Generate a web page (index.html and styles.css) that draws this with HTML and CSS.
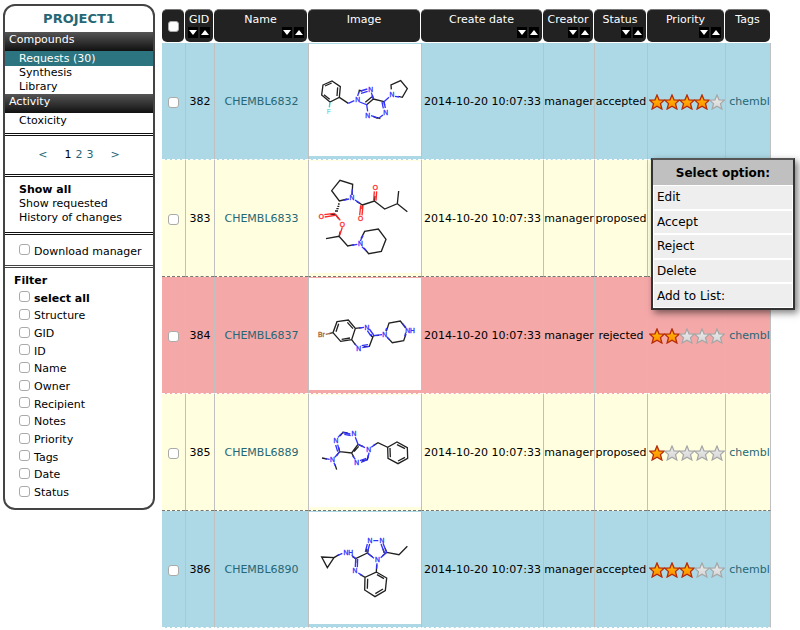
FILE: index.html
```html
<!DOCTYPE html>
<html lang="en">
<head>
<meta charset="utf-8">
<title>PROJECT1 - Requests</title>
<link rel="stylesheet" href="styles.css">
</head>
<body>
<svg class="defs" aria-hidden="true">
  <linearGradient id="gold" x1="0" y1="0" x2="0" y2="1"><stop offset="0" stop-color="#ffc107"/><stop offset="1" stop-color="#ff8a00"/></linearGradient>
  <linearGradient id="grey" x1="0" y1="0" x2="0" y2="1"><stop offset="0" stop-color="#eeeeee"/><stop offset="1" stop-color="#d4d4d4"/></linearGradient>
  <symbol id="on" viewBox="0 0 16 16"><path d="M8 1 L10 5.8 L15.3 6.1 L11.5 9.6 L12.9 15 L8 12.2 L3.1 15 L4.5 9.6 L.7 6.1 L6 5.8Z" fill="url(#gold)" stroke="#b52a08" stroke-width="1.3"/></symbol>
  <symbol id="off" viewBox="0 0 16 16"><path d="M8 1 L10 5.8 L15.3 6.1 L11.5 9.6 L12.9 15 L8 12.2 L3.1 15 L4.5 9.6 L.7 6.1 L6 5.8Z" fill="url(#grey)" stroke="#a6a6a6" stroke-width="1.2"/></symbol>
</svg>
<div class="page">
  <aside class="sidebar">
    <h1>PROJECT1</h1>
    <h2>Compounds</h2>
    <ul class="nav">
      <li class="current"><a href="#">Requests (30)</a></li>
      <li><a href="#">Synthesis</a></li>
      <li><a href="#">Library</a></li>
    </ul>
    <h2>Activity</h2>
    <ul class="nav last"><li><a href="#">Ctoxicity</a></li></ul>
    <nav class="pager"><a href="#">&lt;</a><span class="pages"><b>1</b><a href="#">2</a><a href="#">3</a></span><a href="#">&gt;</a></nav>
    <ul class="views">
      <li class="strong"><a href="#">Show all</a></li>
      <li><a href="#">Show requested</a></li>
      <li><a href="#">History of changes</a></li>
    </ul>
    <div class="download"><label><input type="checkbox">Download manager</label></div>
    <h3>Filter</h3>
    <div class="filters">
      <label class="strong"><input type="checkbox">select all</label>
      <label><input type="checkbox">Structure</label>
      <label><input type="checkbox">GID</label>
      <label><input type="checkbox">ID</label>
      <label><input type="checkbox">Name</label>
      <label><input type="checkbox">Owner</label>
      <label><input type="checkbox">Recipient</label>
      <label><input type="checkbox">Notes</label>
      <label><input type="checkbox">Priority</label>
      <label><input type="checkbox">Tags</label>
      <label><input type="checkbox">Date</label>
      <label><input type="checkbox">Status</label>
    </div>
  </aside>
  <main class="content">
    <table>
      <colgroup><col class="c-check"><col class="c-gid"><col class="c-name"><col class="c-image"><col class="c-date"><col class="c-creator"><col class="c-status"><col class="c-priority"><col class="c-tags"></colgroup>
      <thead>
        <tr>
          <th><div class="head mid"><input type="checkbox" aria-label="Select all rows"></div></th>
          <th><div class="head">GID<span class="sort"><button class="down" aria-label="Sort descending"></button><button class="up" aria-label="Sort ascending"></button></span></div></th>
          <th><div class="head">Name<span class="sort"><button class="down" aria-label="Sort descending"></button><button class="up" aria-label="Sort ascending"></button></span></div></th>
          <th><div class="head">Image</div></th>
          <th><div class="head">Create date<span class="sort"><button class="down" aria-label="Sort descending"></button><button class="up" aria-label="Sort ascending"></button></span></div></th>
          <th><div class="head">Creator<span class="sort"><button class="down" aria-label="Sort descending"></button><button class="up" aria-label="Sort ascending"></button></span></div></th>
          <th><div class="head">Status<span class="sort"><button class="down" aria-label="Sort descending"></button><button class="up" aria-label="Sort ascending"></button></span></div></th>
          <th><div class="head">Priority<span class="sort"><button class="down" aria-label="Sort descending"></button><button class="up" aria-label="Sort ascending"></button></span></div></th>
          <th><div class="head">Tags</div></th>
        </tr>
      </thead>
      <tbody>
        <tr class="accepted">
          <td><input type="checkbox" aria-label="Select 382"></td><td>382</td><td><a href="#">CHEMBL6832</a></td>
          <td class="image"><svg class="mol" viewBox="12 12 336 336">
            <path d="M54 135L81 123L106 140L103 172L75 186L50 165ZM60 138L80 129M98 142L96 168M74 178L57 164M103 172L130 190M205 177L185 194M201 170L181 187M205 177L237 185M226 236L216 233M205 177L202 165M259 148L258 135L287 122L307 146L292 172L280 169M172 153L163 151L161 160M237 185L239 195M204 229L218 235"/>
            <path class="n" d="M130 190L148 182M158 168L161 158M167 153L187 147M168 160L188 154M199 158L205 177M164 186L185 194L188 214M237 185L252 172M237 185L241 204M231 186L235 205M198 227L216 233M221 235L234 225M270 169L282 171"/>
            <path class="f" d="M75 186L73 202"/>
            <g class="n"><text x="158" y="186">N</text><text x="197" y="155">N</text><text x="188" y="234">N</text><text x="242" y="225">N</text><text x="261" y="172">N</text></g><text class="f" x="71" y="222">F</text>
          </svg></td>
          <td>2014-10-20 10:07:33</td><td>manager</td><td>accepted</td>
          <td><span class="stars" role="img" aria-label="4 of 5"><svg><use href="#on"/></svg><svg><use href="#on"/></svg><svg><use href="#on"/></svg><svg><use href="#on"/></svg><svg><use href="#off"/></svg></span></td><td class="tag"><a href="#">chembl</a></td>
        </tr>
        <tr class="proposed">
          <td><input type="checkbox" aria-label="Select 383"></td><td>383</td><td><a href="#">CHEMBL6833</a></td>
          <td class="image"><svg class="mol" viewBox="12 3 336 336">
            <path d="M141 105L143 73L105 61L80 92L103 123L127 117M99 132H104M97 139H103M94 146H101M90 153H99M90 162L76 163M90 162L102 177M172 135L208 123L239 147L277 131L307 155M277 131L281 93M63 236L102 229L128 258L148 254M102 229L106 214M172 135L155 124M168 236L179 214L220 207L243 238L229 274L191 281L177 264M172 135L171 147M208 123L210 108"/>
            <path class="n" d="M142 88L141 105M150 120L165 130M140 256L157 253M166 243L174 227M171 260L184 273M115 121L132 117"/>
            <path class="o" d="M88 160L58 164M90 166L59 171M90 162L106 181M112 202L104 226M174 136L171 166M167 136L164 166M206 122L208 94M213 122L215 94"/>
            <g class="n"><text x="141" y="121">N</text><text x="166" y="258">N</text></g><g class="o"><text x="49" y="178">O</text><text x="112" y="200">O</text><text x="167" y="184">O</text><text x="211" y="91">O</text></g>
          </svg></td>
          <td>2014-10-20 10:07:33</td><td>manager</td><td>proposed</td>
          <td></td><td class="tag"><a href="#">chembl</a></td>
        </tr>
        <tr class="rejected">
          <td><input type="checkbox" aria-label="Select 384"></td><td>384</td><td><a href="#">CHEMBL6837</a></td>
          <td class="image"><svg class="mol" viewBox="12 10 336 336">
            <path d="M96 141L130 136L151 161L140 195L107 200L84 174ZM101 147L93 171M127 143L144 162M135 190L110 194M140 195L151 210M151 161L170 159M205 183L193 215L176 216M197 178L201 187M205 183L222 182M244 170L252 145L286 139L302 160M303 178L296 198L262 204L247 188M84 174L72 177"/>
            <path class="n" d="M162 160L177 158M187 168L198 184M193 163L206 181M149 207L155 214M170 213L189 210M172 219L193 215M206 183L231 180M242 168L245 160M245 186L253 195M293 147L303 159M302 174L299 185"/>
            <path class="br" d="M62 179L76 176"/>
            <g class="n"><text x="186" y="165">N</text><text x="161" y="230">N</text><text x="239" y="186">N</text><text x="315" y="174">NH</text></g><text class="br" x="49" y="188">Br</text>
          </svg></td>
          <td>2014-10-20 10:07:33</td><td>manager</td><td>rejected</td>
          <td><span class="stars" role="img" aria-label="2 of 5"><svg><use href="#on"/></svg><svg><use href="#on"/></svg><svg><use href="#off"/></svg><svg><use href="#off"/></svg><svg><use href="#off"/></svg></span></td><td class="tag"><a href="#">chembl</a></td>
        </tr>
        <tr class="proposed">
          <td><input type="checkbox" aria-label="Select 385"></td><td>385</td><td><a href="#">CHEMBL6889</a></td>
          <td class="image"><svg class="mol" viewBox="12 15 336 336">
            <path d="M104 185L140 189L159 163M147 185L161 169M140 189L147 202M171 213L187 209L190 195M159 163L175 170M104 185L101 172M104 185L94 198M51 204L66 207M90 223L95 239M205 167L219 158L248 172L276 156L307 173L308 205L279 221L249 205L248 172M255 174L256 202M276 164L300 176M300 202L279 213M128 129L114 127L105 138"/>
            <path class="n" d="M99 142L108 132M112 127L136 132M118 133L137 137M151 142L159 163L180 173M192 188L189 205M165 212L184 205M168 217L187 209M143 198L151 208M104 185L98 164M98 185L92 165M104 185L89 202M61 206L74 208M87 218L91 228M199 172L211 163"/>
            <g class="n"><text x="93" y="159">N</text><text x="147" y="139">N</text><text x="191" y="186">N</text><text x="155" y="225">N</text><text x="82" y="217">N</text></g>
          </svg></td>
          <td>2014-10-20 10:07:33</td><td>manager</td><td>proposed</td>
          <td><span class="stars" role="img" aria-label="1 of 5"><svg><use href="#on"/></svg><svg><use href="#off"/></svg><svg><use href="#off"/></svg><svg><use href="#off"/></svg><svg><use href="#off"/></svg></span></td><td class="tag"><a href="#">chembl</a></td>
        </tr>
        <tr class="accepted">
          <td><input type="checkbox" aria-label="Select 386"></td><td>386</td><td><a href="#">CHEMBL6890</a></td>
          <td class="image"><svg class="mol" viewBox="12 12 336 336">
            <path d="M50 147L87 149L67 179ZM87 149L102 140M152 152L187 135M188 135L190 123M183 132L185 122M245 133L240 121M238 135L234 123M245 133L282 140L307 115M245 133L232 144M187 135L203 147M152 152L142 145M215 170L214 192L180 208L165 199M214 192L245 210L241 248L210 266L179 246L180 208M216 200L237 212M234 243L211 257M187 242L188 212M152 152L152 165"/>
            <path class="n" d="M99 142L112 136M140 142L152 152L151 177M158 153L157 178M160 195L172 203M187 135L194 108M181 132L187 108M205 98H220M234 106L245 133M228 108L238 134M245 133L227 149M187 135L207 151M216 166L215 182"/>
            <g class="n"><text x="130" y="140">NH</text><text x="150" y="195">N</text><text x="195" y="106">N</text><text x="231" y="104">N</text><text x="217" y="162">N</text></g>
          </svg></td>
          <td>2014-10-20 10:07:33</td><td>manager</td><td>accepted</td>
          <td><span class="stars" role="img" aria-label="3 of 5"><svg><use href="#on"/></svg><svg><use href="#on"/></svg><svg><use href="#on"/></svg><svg><use href="#off"/></svg><svg><use href="#off"/></svg></span></td><td class="tag"><a href="#">chembl</a></td>
        </tr>
      </tbody>
    </table>
    <div class="menu">
      <h4>Select option:</h4>
      <div class="options">
        <button>Edit</button>
        <button>Accept</button>
        <button>Reject</button>
        <button>Delete</button>
        <button>Add to List:</button>
      </div>
    </div>
  </main>
</div>
</body>
</html>
```
FILE: styles.css
```css
* { box-sizing: border-box; }
body { margin: 0; background: #fff; color: #000; font: 11px/14px "DejaVu Sans", sans-serif; }
a { color: #266775; text-decoration: none; }
ul { list-style: none; margin: 0; padding: 0; }
h1, h2, h3, h4 { margin: 0; font-size: 11px; }
.defs { position: absolute; width: 0; height: 0; }
.page { display: flex; align-items: flex-start; gap: 7px; padding: 4px 29px 0 3px; }
.strong { font-weight: bold; }

input[type="checkbox"] {
  appearance: none; width: 11px; height: 11px; margin: 0; flex: none;
  border: 1px solid #aaa; border-radius: 3px; background: #fff;
}

.sidebar { flex: 0 0 152px; border: 2px solid #444; border-radius: 12px; padding-bottom: 6px; }
.sidebar h1 { font-size: 13px; line-height: 26px; text-align: center; color: #266775; }
.sidebar h2 {
  height: 19px; padding-left: 4px; font-weight: normal; line-height: 16px; color: #fff;
  background: linear-gradient(#555, #111);
}
.nav li { padding-left: 14px; }
.nav a, .views a { color: inherit; }
.nav .current { background: #2c7480; color: #fff; line-height: 15px; }
.nav.last { padding-bottom: 4px; }
.nav.last li { line-height: 16px; }
.pager, .views, .download { border-top: 3px double #111; }
.pager { display: flex; justify-content: center; align-items: center; gap: 17px; height: 41px; }
.pages { display: flex; gap: 4px; }
.pages b { font-weight: normal; }
.views { padding: 6px 0 7px 14px; height: 58px; }
.download { padding: 9px 0 6px 14px; border-bottom: 3px double #444; }
.download label, .filters label { display: flex; gap: 4px; align-items: center; }
.download input, .filters input { margin-bottom: 4px; }
.sidebar h3 { padding: 6px 0 0 9px; }
.filters { display: grid; grid-auto-rows: 1fr; height: 212px; padding-left: 14px; margin-top: 2px; }

.content { flex: 1; min-width: 0; position: relative; padding-top: 5px; }
table { width: 100%; table-layout: fixed; border-collapse: separate; border-spacing: 0; }
.c-check { width: 23px; }
.c-gid { width: 29px; }
.c-name { width: 94px; }
.c-image { width: 113px; }
.c-date { width: 122px; }
.c-creator { width: 51px; }
.c-status { width: 53px; }
.c-priority { width: 78px; }
.c-tags { width: 46px; }
th { padding: 0 1px 1px 0; font-weight: normal; color: #fff; }
.head {
  display: flex; flex-direction: column; height: 33px; padding-top: 3px;
  border-top: 1px solid #777; border-radius: 5px; background: #222;
}
.head.mid { align-items: center; justify-content: center; padding: 0; }
.sort { display: flex; justify-content: flex-end; gap: 2px; padding-right: 3px; }
.sort button {
  display: grid; place-items: center; width: 10px; height: 11px; padding: 0; border: 0; background: #000;
}
.sort button::before { content: ""; border: 4px solid transparent; border-width: 0 4px; }
.sort .down::before { border-top: 5px solid #fff; }
.sort .up::before { border-bottom: 5px solid #fff; }

td {
  height: 117px; padding: 2px 0 0; text-align: center; vertical-align: middle; white-space: nowrap;
  border-left: 1px solid #c0c0c0; border-bottom: 1px dashed #fff;
}
td:first-child { border-left: 0; }
td:last-child { border-right: 1px solid #c0c0c0; }
td input[type="checkbox"] { display: block; margin: 0 auto; }
.accepted { background: #add8e6; }
.proposed { background: #ffffe0; }
.rejected { background: #f4a8a8; }
.proposed td { border-bottom-color: #777; }
td.image { padding: 1px 0 3px; }
td.tag { overflow: hidden; padding-left: 3px; }
.mol { display: block; width: 100%; height: 112px; background: #fff; }
.mol path { fill: none; stroke: #222; stroke-width: 4; }
.mol path.n { stroke: #3333ff; }
.mol path.o { stroke: #ff2a2a; }
.mol path.f { stroke: #33cccc; }
.mol path.br { stroke: #a56a45; }
.mol text { font: 20px "Liberation Sans", sans-serif; text-anchor: middle; stroke-width: 1; }
.mol g.n { fill: #3333ff; stroke: #3333ff; }
.mol g.o { fill: #ff2a2a; stroke: #ff2a2a; }
.mol text.f { fill: #33cccc; }
.mol text.br { fill: #a56a45; stroke: #a56a45; }
.stars { display: flex; justify-content: center; }
.stars svg { width: 16px; height: 16px; margin-right: -1px; }

.menu {
  position: absolute; top: 154px; right: -24px; width: 144px; padding-bottom: 1px;
  border: 2px solid #333; border-top-color: #555; background: #fff; box-shadow: 3px 3px 7px rgba(0, 0, 0, .5);
}
.menu h4 { padding-top: 2px; font-size: 12px; line-height: 23px; text-align: center; background: #c0c0c0; }
.options { display: grid; grid-auto-rows: 1fr; gap: 2px; height: 122px; padding: 1px 1px 0; }
.options button {
  padding: 0 3px; border: 0; background: #eee; color: #000; text-align: left;
  font: 12px/14px "DejaVu Sans", sans-serif;
}
```
